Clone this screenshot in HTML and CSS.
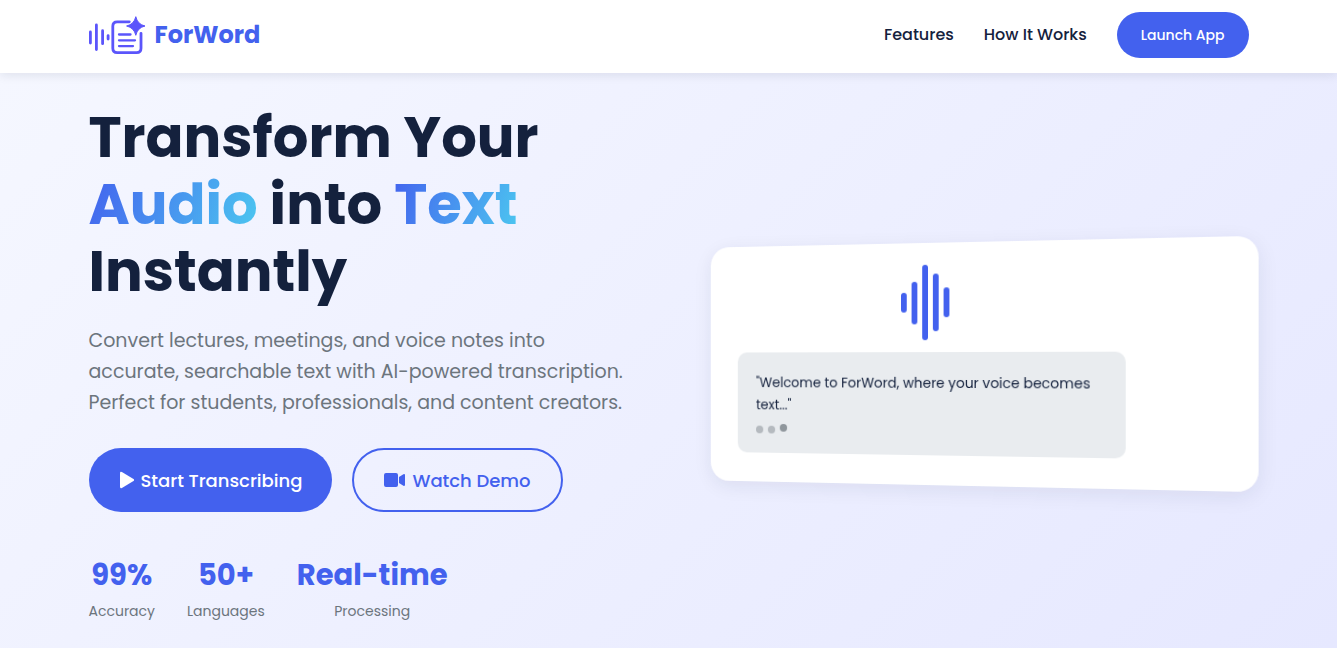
FILE: index.html
```html
<!DOCTYPE html>
<html lang="en">
<head>
<meta charset="utf-8">
<meta name="viewport" content="width=device-width, initial-scale=1">
<title>ForWord</title>
<link rel="stylesheet" href="styles.css">
</head>
<body>
<header class="header">
  <div class="container nav-bar">
    <a href="#" class="logo">
      <svg class="logo-mark" viewBox="1 0 58 40" aria-hidden="true">
        <g fill="none" stroke="currentColor" stroke-width="2.800" stroke-linecap="round" stroke-linejoin="round">
          <path d="M2.400 17v11M8.400 10v24.500M14.600 15.700v13M20.100 20.600v3.400M41.300 6.800H29.200q-4.400 0-4.400 4.400V33.300q0 4.400 4.400 4.400H48.600q4.400 0 4.400-4.400V18.300"/>
          <path stroke-width="2.300" d="M31 19.500h11.500M31 25.300h16M31 31.100h14"/>
        </g>
        <path fill="currentColor" stroke="currentColor" stroke-width="1" stroke-linejoin="round" d="M47.800 1.700q1.700 7.600 9.200 9.300q-7.500 1.700-9.200 9.300q-1.700-7.600-9.200-9.300q7.500-1.700 9.200-9.300z"/>
      </svg>
      <span>ForWord</span>
    </a>
    <nav class="nav">
      <a href="#features">Features</a>
      <a href="#how">How It Works</a>
      <button type="button" class="btn launch">Launch App</button>
    </nav>
  </div>
</header>
<main class="hero">
  <div class="container hero-grid">
    <section class="hero-text">
      <h1>Transform Your <span class="gradient">Audio</span> into <span class="gradient">Text</span> Instantly</h1>
      <p>Convert lectures, meetings, and voice notes into accurate, searchable text with AI-powered transcription. Perfect for students, professionals, and content creators.</p>
      <div class="actions">
        <button type="button" class="btn primary">
          <svg class="icon-play" viewBox="0 0 15 18" aria-hidden="true"><path fill="currentColor" d="M1 2.200Q1 .2 2.900 1.100L14.500 8Q15.700 9 14.500 10L2.900 16.900Q1 17.800 1 15.800z"/></svg>
          <span>Start Transcribing</span>
        </button>
        <button type="button" class="btn outline">
          <svg class="icon-video" viewBox="0 0 21 16" aria-hidden="true"><path fill="currentColor" d="M2 1H12Q14 1 14 3V13Q14 15 12 15H2Q0 15 0 13V3Q0 1 2 1zM15 5L19.400 2.300Q21 1.500 21 3.200V12.800Q21 14.500 19.400 13.700L15 11z"/></svg>
          <span>Watch Demo</span>
        </button>
      </div>
      <dl class="stats">
        <div><dd>99%</dd><dt>Accuracy</dt></div>
        <div><dd>50+</dd><dt>Languages</dt></div>
        <div><dd>Real-time</dd><dt>Processing</dt></div>
      </dl>
    </section>
    <section class="card">
      <div class="demo">
        <div class="wave" aria-hidden="true">
          <i class="bar b1"></i><i class="bar b2"></i><i class="bar b3"></i><i class="bar b4"></i><i class="bar b5"></i>
        </div>
        <div class="transcript">
          <p>"Welcome to ForWord, where your voice becomes text..."</p>
          <div class="dots"><i></i><i></i><i class="active"></i></div>
        </div>
      </div>
    </section>
  </div>
</main>
</body>
</html>
```
FILE: styles.css
```css
* { box-sizing: border-box; margin: 0; padding: 0; }

:root {
  --primary: #4361ee;
  --accent: #4cc9f0;
  --dark: #14213d;
  --gray: #6c757d;
}

body {
  display: flex;
  flex-direction: column;
  min-height: 100vh;
  font-family: Poppins, Inter, "Liberation Sans", sans-serif;
  color: var(--dark);
  line-height: 1.6;
}

a { color: inherit; text-decoration: none; }

.container { width: 100%; max-width: 1200px; margin: 0 auto; padding: 0 20px; }

.header {
  position: relative;
  z-index: 1;
  background: #fff;
  box-shadow: 0 2px 10px rgba(20, 33, 61, 0.1);
}

.nav-bar { display: flex; justify-content: space-between; padding-top: 12px; padding-bottom: 15px; }

.logo {
  display: flex;
  align-items: center;
  gap: 8px;
  font-size: 24px;
  font-weight: 700;
  color: var(--primary);
}
.logo-mark { width: 58px; height: 40px; color: #5b55fb; }

.nav { display: flex; align-items: center; gap: 30px; font-size: 16px; font-weight: 500; }

.btn { border: 0; border-radius: 50px; font-family: inherit; font-weight: 500; cursor: pointer; }

.launch { padding: 12px 24px; font-size: 14px; line-height: 22px; color: #fff; background: var(--primary); }

.hero {
  flex: 1;
  padding: 31px 0 20px;
  background: linear-gradient(135deg, #f5f7ff 0%, #e6e8ff 100%);
}
.hero-grid { display: grid; grid-template-columns: 1fr 1fr; gap: 50px; align-items: center; }

h1 { font-size: 56px; line-height: 67px; font-weight: 700; margin-bottom: 20px; }
.gradient {
  background: linear-gradient(110deg, var(--primary), var(--accent));
  -webkit-background-clip: text;
  background-clip: text;
  color: transparent;
}

.hero-text p { max-width: 545px; font-size: 19px; line-height: 31px; color: var(--gray); margin-bottom: 30px; }

.actions { display: flex; gap: 20px; margin-bottom: 40px; }
.actions .btn { display: flex; align-items: center; justify-content: center; gap: 7px; height: 64px; padding: 0 30px; font-size: 18px; }
.primary { color: #fff; background: var(--primary); }
.actions .outline { border: 2px solid var(--primary); color: var(--primary); background: transparent; }
.icon-play { width: 15px; height: 18px; }
.icon-video { width: 21px; height: 16px; }

.stats { display: flex; gap: 32px; text-align: center; }
.stats dd { font-size: 29px; line-height: 46px; font-weight: 700; color: var(--primary); }
.stats dt { font-size: 14px; line-height: 26px; color: var(--gray); }

.card {
  padding: 30px;
  border-radius: 20px;
  background: #fff;
  box-shadow: 0 5px 20px rgba(20, 33, 61, 0.08);
  transform: perspective(1000px) rotateY(-10deg);
}
.demo { max-width: 400px; }
.wave { display: flex; align-items: center; justify-content: center; gap: 5px; height: 60px; margin-bottom: 20px; }
.bar { flex: none; width: 6px; border-radius: 3px; background: var(--primary); }
.b1 { height: 20px; }
.b2 { height: 43px; }
.b3 { height: 76px; }
.b4 { height: 58px; }
.b5 { height: 30px; }

.transcript { padding: 20px; border-radius: 10px; background: #e9ecef; }
.transcript p { font-size: 14px; line-height: 23px; margin-bottom: 10px; }
.dots { display: flex; gap: 5px; }
.dots i { width: 8px; height: 8px; border-radius: 50%; background: #b5babf; }
.dots .active { background: #8f969c; transform: translateY(-2px); }
```
